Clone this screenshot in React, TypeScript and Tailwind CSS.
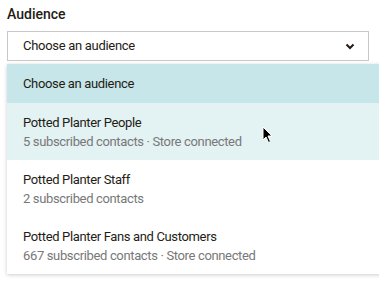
const audiences = [
  { name: "Potted Planter People", meta: "5 subscribed contacts · Store connected", hover: true },
  { name: "Potted Planter Staff", meta: "2 subscribed contacts" },
  { name: "Potted Planter Fans and Customers", meta: "667 subscribed contacts · Store connected" },
];

export default function App() {
  return (
    <div className="relative w-[379px] h-[286px] overflow-hidden bg-white font-['Roboto',sans-serif] text-[#241c15]">
      <div className="pl-[7px] pt-[5px]">
        <div className="text-[14px] font-medium leading-[18px]">Audience</div>
        <div className="mt-[8px] w-[362px] h-[30px] border border-[#c8c8c8] flex items-center justify-between pl-[15px] pr-[12px] text-[13px] tracking-[-0.3px]">
          <span>Choose an audience</span>
          <svg width="10" height="7" viewBox="0 0 10 7" className="mr-[1px]">
            <path d="M1.5 1.5 L5 5 L8.5 1.5" fill="none" stroke="#241c15" strokeWidth="2" />
          </svg>
        </div>
        <div className="mt-[3px] w-[380px] bg-white shadow-[0_1px_4px_rgba(0,0,0,0.2)] text-[13px] tracking-[-0.35px]">
          <div className="h-[39px] flex items-center pl-[16px] bg-[#c6e6e9]">Choose an audience</div>
          {audiences.map((a) => (
            <div
              key={a.name}
              className={`h-[57px] flex flex-col justify-center pl-[16px] gap-[3px] pt-[2px] ${a.hover ? "bg-[#e3f2f3]" : "bg-white"}`}
            >
              <div className="leading-[16px]">{a.name}</div>
              <div className="leading-[16px] text-[#787878]">{a.meta}</div>
            </div>
          ))}
        </div>
      </div>
      <svg className="absolute left-[262px] top-[126px]" width="12" height="18" viewBox="0 0 12 18">
        <path d="M1 1 L1 14 L4 11 L6.5 16.5 L8.5 15.5 L6 10 L10 10 Z" fill="#000" stroke="#fff" strokeWidth="1" />
      </svg>
    </div>
  );
}
